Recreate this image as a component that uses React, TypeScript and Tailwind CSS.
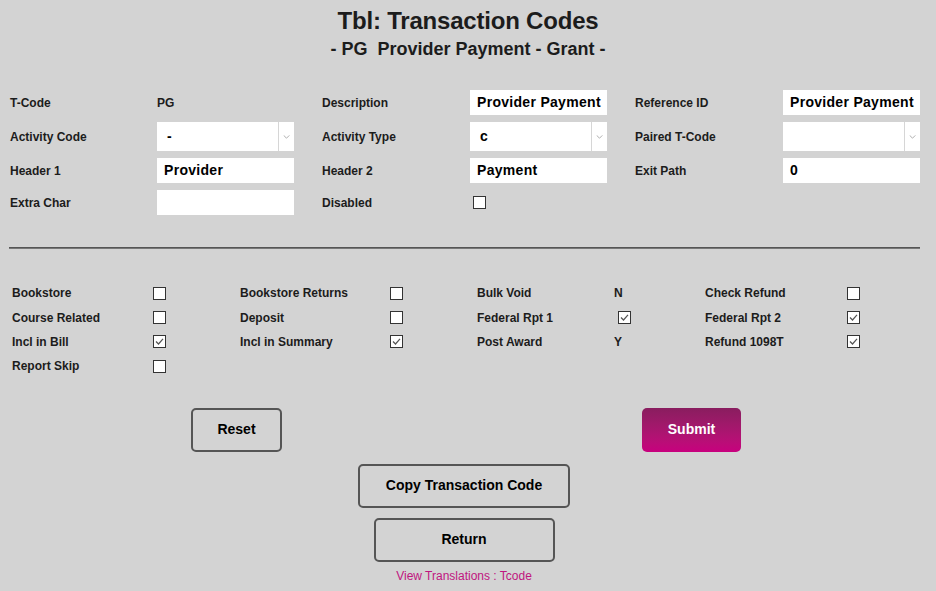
import React from 'react';

const Check = ({ checked = false, className = '' }: { checked?: boolean; className?: string }) => (
  <span className={`inline-flex w-[13px] h-[13px] border border-[#333] bg-white items-center justify-center ${className}`}>
    {checked && (
      <svg viewBox="0 0 11 11" className="w-[11px] h-[11px]">
        <path d="M2 5.5 L4.5 8 L9 2.8" fill="none" stroke="#555" strokeWidth="1.2" />
      </svg>
    )}
  </span>
);

const Label = ({ children }: { children: React.ReactNode }) => (
  <div className="flex items-center text-[12px] font-bold text-[#1c1c1c]">{children}</div>
);

const TextBox = ({ value = '' }: { value?: string }) => (
  <div className="w-[137px] h-full bg-white flex items-center pl-[7px] text-[14px] font-bold tracking-[0.3px] text-black whitespace-nowrap overflow-hidden">
    {value}
  </div>
);

const SelectBox = ({ value = '' }: { value?: string }) => (
  <div className="w-[137px] h-full bg-white flex">
    <div className="flex-1 flex items-center pl-[10px] text-[14px] font-bold text-black">{value}</div>
    <div className="w-[16px] border-l border-[#d6d6d6] flex items-center justify-center">
      <svg viewBox="0 0 8 5" className="w-[7px] h-[4px]">
        <path d="M0.5 0.5 L4 4 L7.5 0.5" fill="none" stroke="#9a9a9a" strokeWidth="1" />
      </svg>
    </div>
  </div>
);

const flags: { label: string; w: string; value: React.ReactNode }[][] = [
  [
    { label: 'Bookstore', w: 'w-[141px]', value: <Check /> },
    { label: 'Bookstore Returns', w: 'w-[150px]', value: <Check /> },
    { label: 'Bulk Void', w: 'w-[137px]', value: <span className="font-bold text-[12px]">N</span> },
    { label: 'Check Refund', w: 'w-[142px]', value: <Check /> },
  ],
  [
    { label: 'Course Related', w: 'w-[141px]', value: <Check /> },
    { label: 'Deposit', w: 'w-[150px]', value: <Check /> },
    { label: 'Federal Rpt 1', w: 'w-[141px]', value: <Check checked /> },
    { label: 'Federal Rpt 2', w: 'w-[142px]', value: <Check checked /> },
  ],
  [
    { label: 'Incl in Bill', w: 'w-[141px]', value: <Check checked /> },
    { label: 'Incl in Summary', w: 'w-[150px]', value: <Check checked /> },
    { label: 'Post Award', w: 'w-[137px]', value: <span className="font-bold text-[12px]">Y</span> },
    { label: 'Refund 1098T', w: 'w-[142px]', value: <Check checked /> },
  ],
  [{ label: 'Report Skip', w: 'w-[141px]', value: <Check /> }],
];

export default function App() {
  return (
    <div className="w-[936px] h-[591px] overflow-hidden bg-[#d3d3d3] text-[#1c1c1c] font-['Liberation_Sans',Arial,sans-serif]">
      {/* Heading */}
      <div className="pt-[7px] flex flex-col items-center">
        <h1 className="text-[24px] leading-[28px] font-bold tracking-[-0.2px]">Tbl: Transaction Codes</h1>
        <h2 className="mt-[3px] text-[18px] leading-[22px] font-bold whitespace-pre">- PG  Provider Payment - Grant -</h2>
      </div>

      {/* Main fields */}
      <div className="mt-[30px] pl-[10px] grid grid-cols-[147px_165px_148px_165px_148px_137px] grid-rows-[25px_29px_25px_25px] gap-y-[7px]">
        <Label>T-Code</Label>
        <Label>PG</Label>
        <Label>Description</Label>
        <TextBox value="Provider Payment" />
        <Label>Reference ID</Label>
        <TextBox value="Provider Payment" />

        <Label>Activity Code</Label>
        <SelectBox value="-" />
        <Label>Activity Type</Label>
        <SelectBox value="c" />
        <Label>Paired T-Code</Label>
        <SelectBox />

        <Label>Header 1</Label>
        <TextBox value="Provider" />
        <Label>Header 2</Label>
        <TextBox value="Payment" />
        <Label>Exit Path</Label>
        <TextBox value="0" />

        <Label>Extra Char</Label>
        <TextBox />
        <Label>Disabled</Label>
        <div className="flex items-center pl-[3px]">
          <Check />
        </div>
        <div />
        <div />
      </div>

      <div className="mt-[32px] ml-[9px] mr-[16px] h-0 border-t border-b border-t-[#555] border-b-[#777]" />

      {/* Flags */}
      <div className="mt-[32px] pl-[12px] flex flex-col">
        {flags.map((row, i) => (
          <div key={i} className="h-[24.4px] grid grid-cols-[228px_237px_228px_231px]">
            {row.map((f) => (
              <div key={f.label} className="flex items-center">
                <span className={`${f.w} text-[12px] font-bold`}>{f.label}</span>
                {f.value}
              </div>
            ))}
          </div>
        ))}
      </div>

      {/* Actions */}
      <div className="mt-[29px] flex pl-[191px] gap-[360px]">
        <button className="w-[91px] h-[44px] rounded-[5px] border-2 border-[#555] text-[14px] font-bold text-black">
          Reset
        </button>
        <button className="w-[99px] h-[44px] rounded-[5px] bg-linear-to-b from-[#891d5f] to-[#c8007e] text-[14px] font-bold text-white">
          Submit
        </button>
      </div>
      <div className="mt-[12px] flex flex-col items-center pr-[8px]">
        <button className="w-[212px] h-[44px] rounded-[5px] border-2 border-[#555] text-[14px] font-bold text-black">
          Copy Transaction Code
        </button>
        <button className="mt-[10px] w-[181px] h-[44px] rounded-[5px] border-2 border-[#555] text-[14px] font-bold text-black">
          Return
        </button>
        <a className="mt-[7px] text-[12px] leading-[14px] text-[#c0157f]">View Translations : Tcode</a>
      </div>
    </div>
  );
}
